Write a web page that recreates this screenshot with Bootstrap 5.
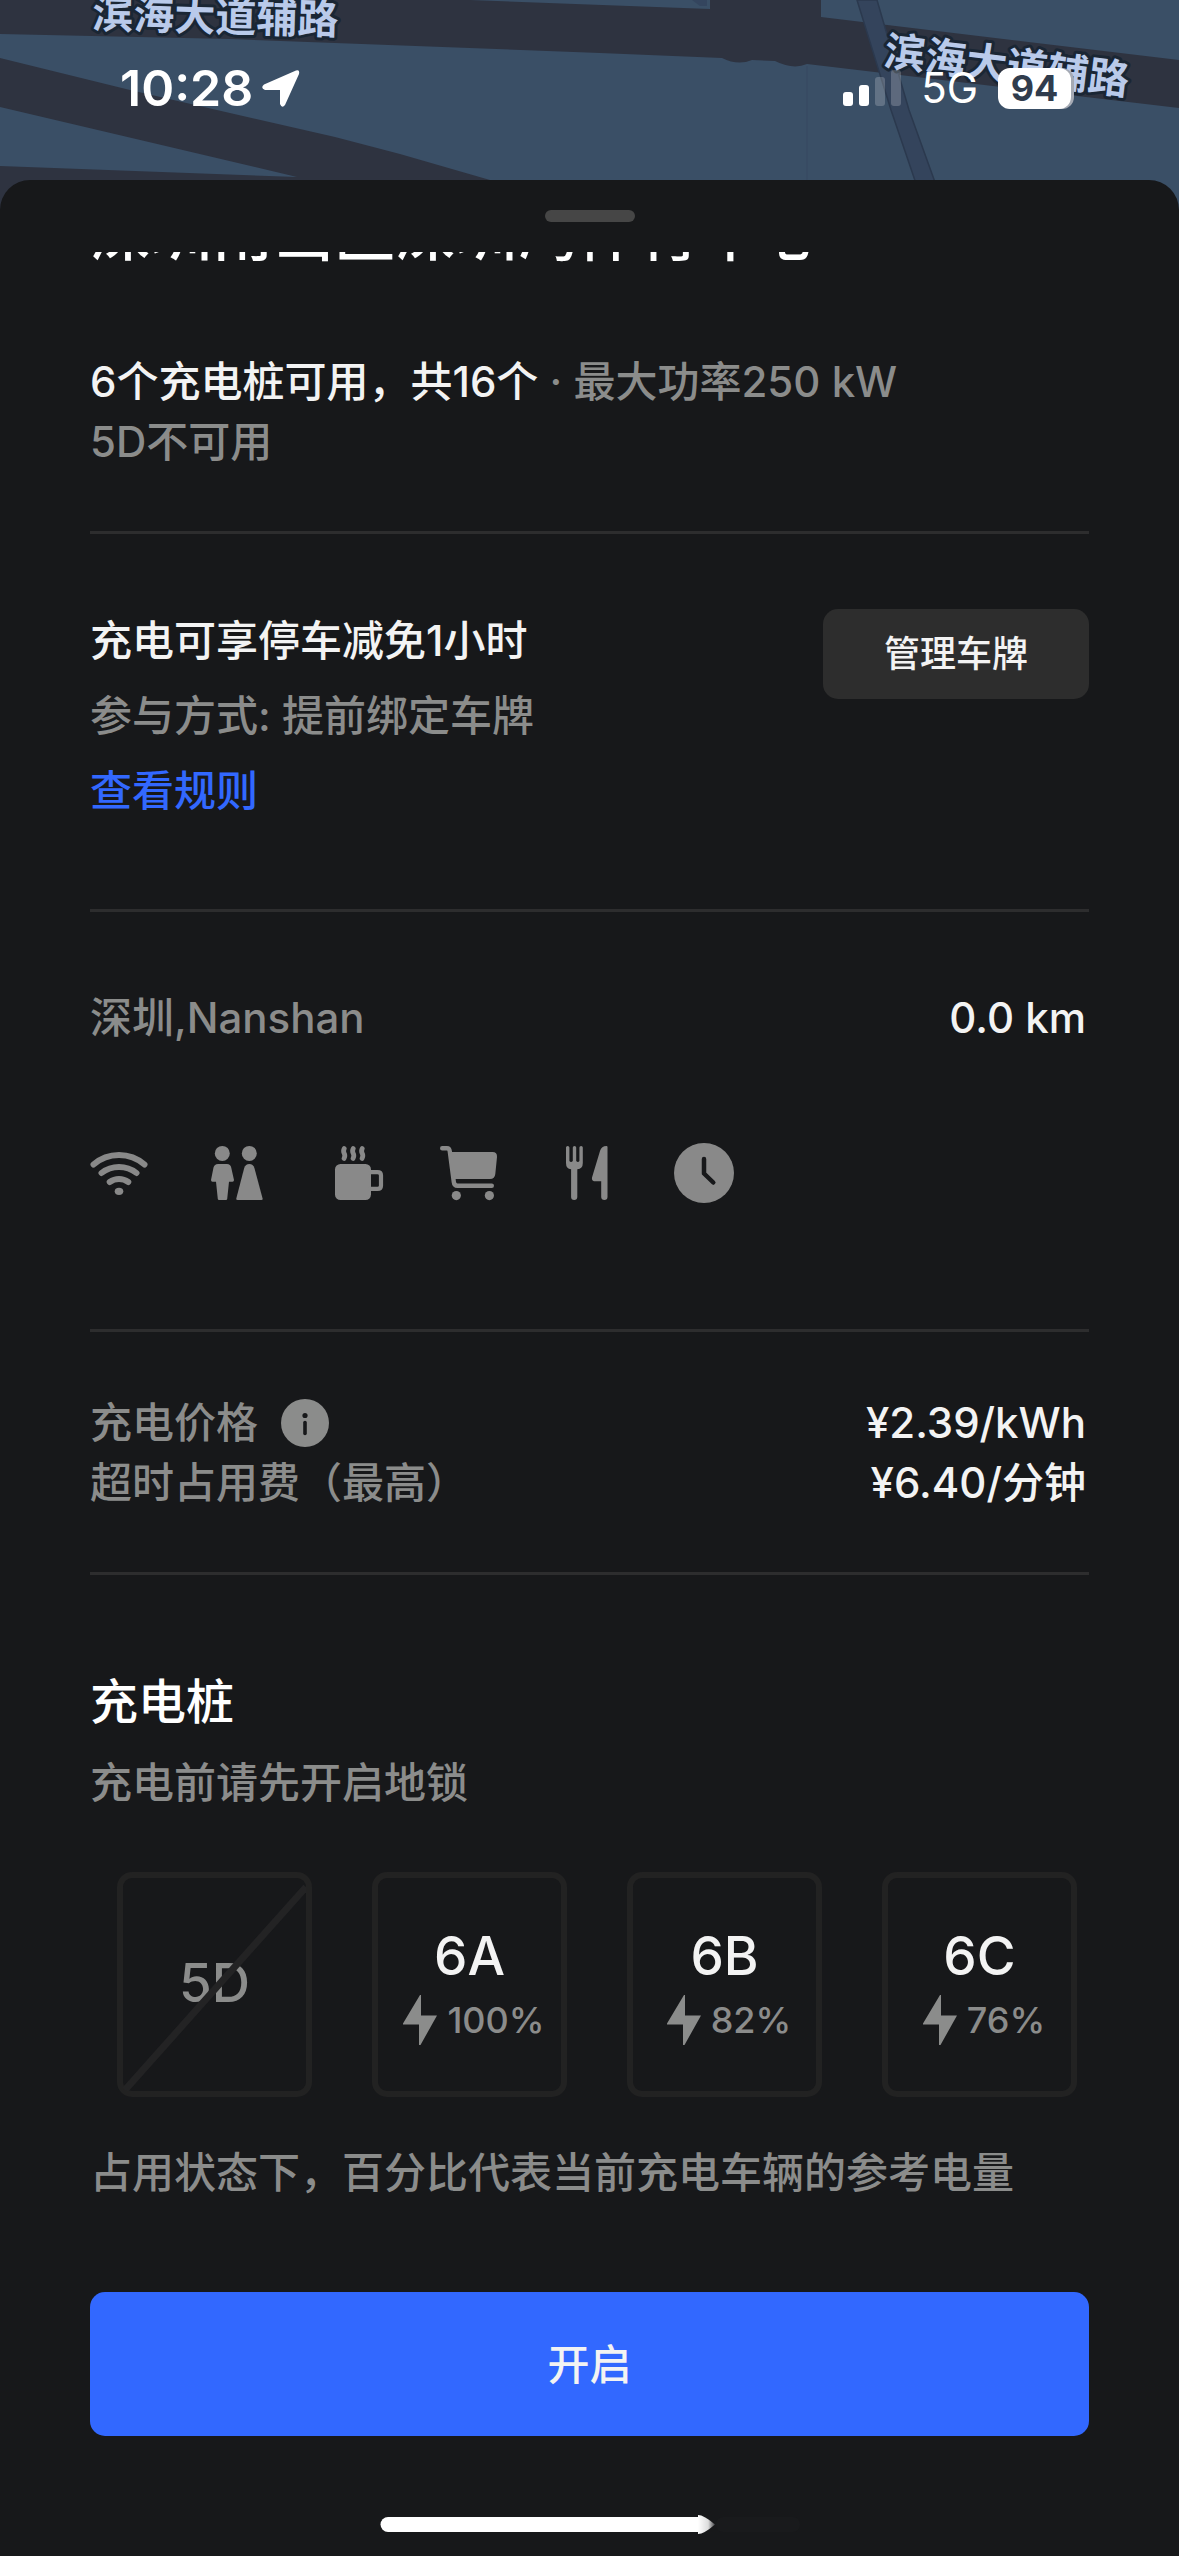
<!DOCTYPE html>
<html lang="zh-CN" data-bs-theme="dark">
<head>
<meta charset="utf-8">
<meta name="viewport" content="width=device-width, initial-scale=1">
<title>充电站详情</title>
<link href="https://cdn.jsdelivr.net/npm/bootstrap@5.3.0/dist/css/bootstrap.min.css" rel="stylesheet">
<style>
  :root { --ink: #f3f3f3; --dim: #8b8c8b; --line: #2d2d2e; --sheet: #17181a; --accent: #3268ff; }
  body { background: var(--sheet); color: var(--ink); font-family: Inter, "Noto Sans CJK SC", sans-serif; font-size: 42px; line-height: 60px; font-weight: 500; }
  .map-head { height: 180px; background: #3a4f66; }
  .map-art { top: 0; left: 0; width: 100%; height: 210px; }
  .map-label { font-weight: 700; font-size: 41px; fill: #b9caea; stroke: #1a2634; stroke-width: 6px; paint-order: stroke; stroke-linejoin: round; }
  .status-row { padding: 58px 108px 0 120px; color: #fff; line-height: 60px; }
  .clock-text { font-size: 50px; font-weight: 600; }
  .net-text { font-size: 42px; font-weight: 400; }
  .battery { height: 41px; width: 73px; line-height: 41px; font-size: 36px; font-weight: 700; color: #303c4d; background: #fff; border-radius: 12px; box-shadow: 3px 0 0 #a5aab4; }
  .sheet { background: var(--sheet); border-radius: 30px 30px 0 0; padding: 30px 90px 24px; }
  .grip { width: 90px; height: 12px; background: #464646; border-radius: 6px; }
  .title-clip { height: 10px; margin-top: 30px; overflow: hidden; }
  .title-clip h1 { font-size: 61px; line-height: 56px; font-weight: 500; margin: 0; white-space: nowrap; }
  .dim, .pile.dim { color: var(--dim); }
  .block { border-bottom: 3px solid var(--line); }
  .block-info { padding: 90px 0 59px; }
  .block-parking { padding: 69px 0 81px; line-height: 75px; }
  .block-place { padding: 76px 0 126px; }
  .block-price { padding: 61px 0 59px; }
  .figure-value { padding-right: 3px; }
  .rules { color: var(--accent); text-decoration: none; }
  .btn-plate { margin-top: 6px; width: 266px; height: 90px; padding: 0; font-size: 36px; font-weight: 500; color: var(--ink); background: #2d2d2d; border: 0; border-radius: 15px; }
  .amenities { gap: 57px; margin-top: 95px; }
  .amenities svg { width: 60px; height: 60px; overflow: visible; color: #898989; }
  .info-btn { margin-left: 23px; width: 48px; height: 48px; }
  .piles-title { font-size: 48px; line-height: 60px; font-weight: 500; margin: 97px 0 21px; }
  .piles { gap: 60px; margin-top: 59px; padding: 0 12px 0 27px; }
  .pile { flex: 1 1 0; min-width: 0; height: 225px; border: 6px solid #222; border-radius: 15px; background: none; padding: 0; color: var(--ink); line-height: 64px; }
  .pile-name { font-size: 53px; font-weight: 500; }
  .pile-load { font-size: 36px; font-weight: 500; gap: 5px; }
  .slash { top: 0; left: 0; width: 100%; height: 100%; }
  .pile-live { padding-top: 6px; }
  .note { margin: 46px 0 89px; }
  .btn-open { height: 144px; border-radius: 15px; border: 0; background: var(--accent); color: var(--ink); font-size: 42px; font-weight: 500; }
  .home-bar { display: block; width: 420px; height: 21px; margin: 78px auto 0; }
</style>
</head>
<body>
<header class="map-head position-relative">
  <svg class="map-art position-absolute" viewBox="0 0 1179 210" preserveAspectRatio="xMidYMin slice" aria-hidden="true">
    <rect width="1179" height="210" fill="#3a4f66"/>
    <g fill="#2e3340">
      <path d="M0 0H470L710 9V0H821V17L1179 60V108L807 64Q793 70 775 61L752 60Q738 66 722 58L600 53L230 39L0 34Z"/>
      <path d="M0 58L130 90L335 137L400 154L490 180L560 210H0V166L297 177L0 107Z"/>
    </g>
    <path d="M692 0L700 6H707V0Z" fill="#34455e"/>
    <path d="M807 66V180" stroke="#364961" stroke-width="1"/>
    <path d="M857 0L891 110L925 210H945L909 110L877 0Z" fill="#34445c" stroke="#2b394e" stroke-width="1.5"/>
    <text class="map-label" x="92" y="28" transform="rotate(1.5 92 28)">滨海大道辅路</text>
    <text class="map-label" x="883" y="65" transform="rotate(7 883 65)">滨海大道辅路</text>
  </svg>
  <div class="status-row position-relative d-flex align-items-center justify-content-between">
    <div class="d-flex align-items-center gap-2">
      <span class="clock-text">10:28</span>
      <svg width="40" height="40" viewBox="0 0 40 40" aria-hidden="true"><path d="M35 2.500Q39 1 38 6L24 37Q21 41 19 36V22H4Q-1 20 3 16.500Z" fill="#fff"/></svg>
    </div>
    <div class="d-flex align-items-center">
      <svg width="58" height="37" viewBox="0 0 58 37" aria-hidden="true" fill="#fff"><rect y="22" width="10" height="14" rx="3"/><rect x="16" y="15" width="10" height="21" rx="3"/><g opacity=".2"><rect x="32" y="7" width="10" height="29" rx="3"/><rect x="48" width="10" height="36" rx="3"/></g></svg>
      <span class="net-text ms-3 me-3 ps-1 pe-1">5G</span>
      <span class="battery text-center">94</span>
    </div>
  </div>
</header>

<main class="sheet position-relative">
  <div class="grip mx-auto"></div>
  <div class="title-clip d-flex align-items-end"><h1>深圳南山区深圳湾体育中心</h1></div>

  <section class="block block-info">
    <div>6个充电桩可用，共16个 <span class="dim">· 最大功率250 kW</span></div>
    <div class="dim">5D不可用</div>
  </section>

  <section class="block block-parking d-flex justify-content-between align-items-start">
    <div>
      <div>充电可享停车减免1小时</div>
      <div class="dim">参与方式: 提前绑定车牌</div>
      <a class="rules" href="#">查看规则</a>
    </div>
    <button type="button" class="btn btn-plate">管理车牌</button>
  </section>

  <section class="block block-place">
    <div class="d-flex justify-content-between"><span class="dim">深圳,Nanshan</span><span class="figure-value">0.0 km</span></div>
    <div class="amenities d-flex">
      <svg viewBox="0 0 60 60" role="img" aria-label="Wi-Fi"><g fill="none" stroke="currentColor" stroke-width="6" stroke-linecap="round"><path d="M3.500 21.500A39 39 0 0 1 54.500 21.500"/><path d="M11.500 30A28.500 28.500 0 0 1 46.500 30"/><path d="M19.700 39A16 16 0 0 1 38.300 39"/></g><ellipse cx="29" cy="48.300" rx="4.300" ry="3.600" fill="currentColor"/></svg>
      <svg viewBox="0 0 60 60" role="img" aria-label="洗手间" fill="currentColor"><circle cx="15.300" cy="10.400" r="7.500"/><circle cx="42.300" cy="10.400" r="7.500"/><path d="M11 21H20Q23.500 21 24.200 24.500L27 37Q27 38.700 25.500 38.700H22L20.200 56Q20 57 19 57H12Q11 57 10.800 56L9 38.700H5.500Q4 38.700 4 37L6.500 24.500Q7.500 21 11 21Z"/><path d="M42.300 21Q46.200 21 47.400 25L55.600 55.500Q56 57 54.500 57H30.500Q29 57 29.300 55.500L37.200 25Q38.500 21 42.300 21Z"/></svg>
      <svg viewBox="0 0 60 60" role="img" aria-label="咖啡"><rect x="11" y="21" width="36" height="36" rx="5.500" fill="currentColor"/><g fill="none" stroke="currentColor" stroke-linecap="round"><path stroke-width="4.200" d="M46 29.200H53.500Q57 29.200 57 32.500V42.500Q57 45.900 53.500 45.900H46"/><path stroke-width="4.800" d="M20.300 5.500C17.500 10.500 23 10.500 20 15.500M29.300 5.500C26.500 10.500 32 10.500 29 15.500M38.300 5.500C35.500 10.500 41 10.500 38 15.500"/></g></svg>
      <svg viewBox="0 0 60 60" role="img" aria-label="购物" fill="currentColor"><path fill="none" stroke="currentColor" stroke-width="4.400" stroke-linecap="round" d="M1.200 5.200H6Q8.400 5.200 8.800 8.500L12.800 39Q13.200 42.800 16.500 42.800H50.800"/><path d="M10 9H51.500Q56.300 9 56 14L54.300 31Q53.800 36 49 36H13Z"/><circle cx="15.300" cy="52.600" r="4.600"/><circle cx="48.400" cy="52.600" r="4.600"/></svg>
      <svg viewBox="0 0 60 60" role="img" aria-label="餐饮" fill="currentColor"><path d="M8 4.500Q8 3 9.700 3T11.400 4.500V18Q13 20 14.800 18V4.500Q14.800 3 16.500 3T18.200 4.500V18Q20 20 21.400 18V4.500Q21.400 3 23.100 3T24.800 4.500V20Q24.800 26 19.300 26.300V54Q19.300 57 16.200 57T13.100 54V26.300Q8 26 8 20Z"/><path d="M49.500 4V54Q49.500 57 46.400 57T43.200 54V38.300H36Q33.500 37.500 34 34.500L42 8Q43.500 3 48.500 3Q49.500 3 49.500 4Z"/></svg>
      <svg viewBox="0 0 60 60" role="img" aria-label="营业时间"><circle cx="29" cy="30" r="30" fill="currentColor"/><path d="M29 16V30.500L38.300 39.500" fill="none" stroke="#17181a" stroke-width="4.500" stroke-linecap="round" stroke-linejoin="round"/></svg>
    </div>
  </section>

  <section class="block block-price">
    <div class="d-flex justify-content-between">
      <span class="dim d-flex align-items-center">充电价格
        <button type="button" class="info-btn btn p-0 border-0 d-flex" aria-label="价格说明"><svg width="48" height="48" viewBox="0 0 48 48"><circle cx="24" cy="24" r="24" fill="#8b8c8b"/><circle cx="24" cy="16.500" r="2.600" fill="#17181a"/><path d="M24 23.500V34.500" stroke="#17181a" stroke-width="3.600" stroke-linecap="round"/></svg></button>
      </span>
      <span class="figure-value">¥2.39/kWh</span>
    </div>
    <div class="d-flex justify-content-between"><span class="dim">超时占用费（最高）</span><span class="figure-value">¥6.40/分钟</span></div>
  </section>

  <section>
    <h2 class="piles-title">充电桩</h2>
    <div class="dim">充电前请先开启地锁</div>
    <div class="piles d-flex">
      <button type="button" class="pile position-relative dim" disabled>
        <span class="pile-name">5D</span>
        <svg class="slash position-absolute" viewBox="0 0 183 213" preserveAspectRatio="none" aria-hidden="true"><path d="M2 212L183 9" stroke="#232324" stroke-width="7"/></svg>
      </button>
      <button type="button" class="pile pile-live d-flex flex-column align-items-center justify-content-center">
        <span class="pile-name">6A</span>
        <span class="pile-load dim d-flex align-items-center"><svg width="48" height="50" viewBox="-9 0 48 50" aria-hidden="true"><path d="M17 0H18V20.500H34L17.500 50H16V29.500H0V28.500Z" fill="currentColor"/></svg>100%</span>
      </button>
      <button type="button" class="pile pile-live d-flex flex-column align-items-center justify-content-center">
        <span class="pile-name">6B</span>
        <span class="pile-load dim d-flex align-items-center"><svg width="48" height="50" viewBox="-9 0 48 50" aria-hidden="true"><path d="M17 0H18V20.500H34L17.500 50H16V29.500H0V28.500Z" fill="currentColor"/></svg>82%</span>
      </button>
      <button type="button" class="pile pile-live d-flex flex-column align-items-center justify-content-center">
        <span class="pile-name">6C</span>
        <span class="pile-load dim d-flex align-items-center"><svg width="48" height="50" viewBox="-9 0 48 50" aria-hidden="true"><path d="M17 0H18V20.500H34L17.500 50H16V29.500H0V28.500Z" fill="currentColor"/></svg>76%</span>
      </button>
    </div>
    <p class="note dim">占用状态下，百分比代表当前充电车辆的参考电量</p>
    <button type="button" class="btn btn-open w-100">开启</button>
  </section>
  <svg class="home-bar" viewBox="0 0 420 21" aria-hidden="true">
    <defs><linearGradient id="tip"><stop offset="0" stop-color="#fff"/><stop offset=".6" stop-color="#fff" stop-opacity=".85"/><stop offset="1" stop-color="#fff" stop-opacity=".2"/></linearGradient></defs>
    <path d="M8 3H318V18H8A7.500 7.500 0 0 1 8 3Z" fill="#fff"/>
    <path d="M318 1Q324 1 335 10.500Q324 20 318 20Z" fill="url(#tip)"/>
    <rect x="336" y="3" width="84" height="15" rx="7" fill="#191a1c"/>
  </svg>
</main>
<script src="https://cdn.jsdelivr.net/npm/bootstrap@5.3.0/dist/js/bootstrap.bundle.min.js"></script>
</body>
</html>
